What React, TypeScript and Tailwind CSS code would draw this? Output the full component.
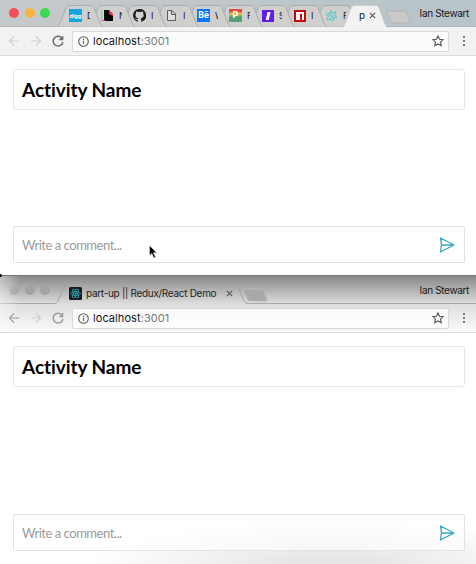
import React from "react";

const mark = "h-3 w-3 shrink-0";

function Digg() {
  return (
    <div className="flex h-[13px] w-[13px] shrink-0 items-center justify-center bg-[#15a7dc] font-['Roboto',sans-serif] text-[6px] font-bold leading-none text-white">
      digg
    </div>
  );
}

function Page() {
  return (
    <svg className="h-[13px] w-[13px] shrink-0" viewBox="0 0 13 13">
      <path d="M.5 1H8v11H.5z" fill="#5cc7cf" />
      <path d="M1.500 1H8L5 3l-2 8H1.500z" fill="#efe08a" />
      <path d="M8 1l4 4v3H7z" fill="#e83a58" />
      <path d="M3 1h5v4l4 2v5H3z" fill="#080808" />
      <path d="M8 1l4 4H8z" fill="#ec2851" />
      <path d="M1 11h3v1H1z" fill="#db38ba" />
    </svg>
  );
}

function Github() {
  return (
    <svg className="h-[13px] w-[13px] shrink-0" viewBox="0 0 16 16" fill="#1b1b1b">
      <path d="M8 0C3.58 0 0 3.58 0 8c0 3.54 2.29 6.53 5.47 7.59.4.07.55-.17.55-.38v-1.49C4 14.2 3.5 12.8 3.3 12.3c-.15-.3-.7-.9-1-1.1-.3-.2-.7-.5 0-.5.7 0 1.2.6 1.4.9.8 1.4 2 1 2.4.8.1-.6.3-1 .6-1.2C4.9 11 3 10.3 3 7.3c0-.9.3-1.6.8-2.2-.1-.2-.3-1 .1-2.1 0 0 .7-.2 2.2.8a7.6 7.6 0 014 0c1.5-1 2.2-.8 2.2-.8.4 1.1.2 1.9.1 2.1.5.6.8 1.3.8 2.2 0 3-1.9 3.7-3.7 3.9.3.3.6.8.6 1.5v2.5c0 .2.1.5.5.4A8 8 0 008 0z" />
    </svg>
  );
}

function Doc() {
  return (
    <svg className="h-[13px] w-[13px] shrink-0" viewBox="0 0 13 13" fill="#dedede" stroke="#5e5e5e">
      <path d="M2.500 1.500h4.500l3.500 3.500v6.500h-8zM6.500 1.500v4h4" />
    </svg>
  );
}

function Behance() {
  return (
    <div className="flex h-[13px] w-[13px] shrink-0 items-center justify-center bg-[#0878f7] font-['Roboto',sans-serif] text-[9px] font-bold leading-none text-white">
      Bē
    </div>
  );
}

function Pocket() {
  return (
    <div className="flex h-[13px] w-[13px] shrink-0 items-center justify-center bg-linear-to-b from-[#e14c3d] from-20% via-[#f0bf3c] via-35% to-[#56a078] to-60% font-['Roboto',sans-serif] text-[9px] font-bold leading-none text-white">
      P
    </div>
  );
}

function Slash() {
  return (
    <svg className={mark} viewBox="0 0 12 12">
      <path d="M0 0h12v12H0z" fill="#651be6" />
      <path d="M5.500 2h3L6.800 10h-3z" fill="#fff" />
    </svg>
  );
}

function Npm() {
  return (
    <svg className={mark} viewBox="0 0 12 12">
      <path d="M0 0h12v12H0z" fill="#c4080d" />
      <path d="M2 2h8v8H8V4H6v6H2z" fill="#fff" />
    </svg>
  );
}

function Teal() {
  return (
    <svg className="h-[13px] w-[13px] shrink-0" viewBox="0 0 13 13" fill="none" stroke="#4fcbc8" strokeWidth="1">
      <path d="M6 1.500L7.500 4 11 3 9.500 6 12 8.500 8.500 9 8 12 5 10 2 11 3 7.500 1 5 4.500 4.500zM4.500 4.500l4 4.500M9.500 6L5 10M7.500 4L3 7.500" />
    </svg>
  );
}

function ReactMark() {
  return (
    <svg className="h-[13px] w-[13px] shrink-0" viewBox="0 0 13 13" fill="none" stroke="#39aebd" strokeWidth=".7">
      <rect width="13" height="13" rx="1.500" fill="#171b1e" stroke="none" />
      <ellipse cx="6.500" cy="6.500" rx="5" ry="2" />
      <ellipse cx="6.500" cy="6.500" rx="5" ry="2" transform="rotate(60 6.500 6.500)" />
      <ellipse cx="6.500" cy="6.500" rx="5" ry="2" transform="rotate(120 6.500 6.500)" />
      <circle cx="6.500" cy="6.500" r=".8" fill="#39aebd" />
    </svg>
  );
}

const tabs = [
  { icon: <Digg />, text: "D", z: "z-[9]" },
  { icon: <Page />, text: "N", z: "z-[8]" },
  { icon: <Github />, text: "I", z: "z-[7]" },
  { icon: <Doc />, text: "I", z: "z-[6]" },
  { icon: <Behance />, text: "W", z: "z-[5]" },
  { icon: <Pocket />, text: "F", z: "z-[4]" },
  { icon: <Slash />, text: "S", z: "z-[3]" },
  { icon: <Npm />, text: "I", z: "z-[2]" },
  { icon: <Teal />, text: "F", z: "z-[1]" },
];

function Close() {
  return (
    <svg className="h-[7px] w-[7px] shrink-0" viewBox="0 0 7 7" stroke="#555" strokeWidth="1.100">
      <path d="M.8.8l5.400 5.400M6.200.8L.8 6.200" />
    </svg>
  );
}

function Lights({ colors }: { colors: string[] }) {
  return (
    <div className="flex w-[61px] shrink-0 gap-[5.500px] pl-[9px]">
      {colors.map((c, i) => (
        <span key={i} className={`h-[10px] w-[10px] rounded-full ${c}`} />
      ))}
    </div>
  );
}

function NewTab({ dim }: { dim?: boolean }) {
  return (
    <svg className="block h-[14px] w-[27px] shrink-0" viewBox="0 0 27 14">
      <path
        d="M2.500 1H19Q20.500 1 21 2L25.200 11.500Q25.500 13 24 13H8.500Q6.500 13 6 12L1.500 2.500Q1 1 2.500 1z"
        fill={dim ? "#a9a9a9" : "#cac9c8"}
        stroke={dim ? "#bababa" : "#a9afb1"}
        strokeWidth=".8"
      />
    </svg>
  );
}

function User() {
  return (
    <span className="ml-auto mr-[7px] whitespace-nowrap font-['Inter',sans-serif] text-[10px] tracking-[-0.350px] text-[#171717]">
      Ian Stewart
    </span>
  );
}

function Toolbar({ back, reload, className }: { back: string; reload: string; className: string }) {
  return (
    <div className={`flex h-[29px] shrink-0 items-center border-b border-[#dcdcdc] ${className}`}>
      <svg className="ml-2 h-3 w-3" viewBox="0 0 12 12" fill="none" stroke={back} strokeWidth="1.200">
        <path d="M11 6H1.500M6 1.500L1.500 6 6 10.500" />
      </svg>
      <svg className="ml-[10px] h-3 w-3" viewBox="0 0 12 12" fill="none" stroke="#cfcfcf" strokeWidth="1.200">
        <path d="M1 6h9.500M6 1.500L10.500 6 6 10.500" />
      </svg>
      <svg className="ml-[10px] h-3 w-3" viewBox="0 0 12 12" fill="none" stroke={reload} strokeWidth="1.400">
        <path d="M9.700 2.800A4.900 4.900 0 1 0 10.900 7" />
        <path d="M11.300.5v4.700H6.600z" fill={reload} stroke="none" />
      </svg>
      <div className="ml-2 flex h-[21px] w-[377px] items-center rounded-[2px] border border-[#d9d9d9] bg-white/80">
        <svg className="ml-[5px] h-[11px] w-[11px] shrink-0" viewBox="0 0 11 11" fill="none" stroke="#5d5d5d" strokeWidth="1.100">
          <circle cx="5.500" cy="5.500" r="4.800" />
          <path d="M5.500 4.800V8M5.500 2.700v1.200" />
        </svg>
        <span className="ml-1 whitespace-nowrap pt-px font-['Inter',sans-serif] text-[11px] leading-none tracking-[0.070px] text-[#141414]">
          localhost<span className="text-[#777]">:3001</span>
        </span>
        <svg className="ml-auto mr-1 h-3 w-3" viewBox="0 0 12 12" fill="none" stroke="#555" strokeWidth="1.100">
          <path d="M6 .9l1.500 3.300 3.700.4-2.700 2.500.8 3.700L6 9 2.700 10.800l.8-3.700L.8 4.600l3.700-.4z" />
        </svg>
      </div>
      <div className="ml-[13.500px] flex flex-col gap-[2px]">
        <i className="h-[2px] w-[2px] rounded-full bg-[#555]" />
        <i className="h-[2px] w-[2px] rounded-full bg-[#555]" />
        <i className="h-[2px] w-[2px] rounded-full bg-[#555]" />
      </div>
    </div>
  );
}

function Activity({ compose }: { compose: string }) {
  return (
    <div className="flex flex-1 flex-col pl-[13px] pr-[11px] pt-[13px] font-['Lato',sans-serif]">
      <h1 className="flex h-[41px] shrink-0 items-center rounded-[3px] border-[1.500px] border-[#e7e7e7] bg-white pl-2 pt-px text-[19px] font-bold tracking-[-0.060px] text-black [font-variant-ligatures:none]">
        Activity Name
      </h1>
      <div className={`mt-auto flex h-[37px] shrink-0 items-center rounded-[1px] border border-[#e3e3e3] pl-2 pr-[9px] text-[13px] text-[#9b9b9b] ${compose}`}>
        <span className="whitespace-nowrap pt-[2px] tracking-[-0.470px]">Write a comment...</span>
        <svg className="ml-auto h-4 w-4" viewBox="0 0 16 16" fill="none" stroke="#38adbd" strokeWidth="1.400" strokeLinejoin="round">
          <path d="M1.500 1L15 8 1.500 15 2.500 8zM2.500 8H15" />
        </svg>
      </div>
    </div>
  );
}

export default function App() {
  return (
    <main className="relative flex h-[564px] w-[476px] flex-col overflow-hidden bg-white">
      <section className="flex h-[276px] shrink-0 flex-col border-b border-[#777]">
        <header className="flex h-[27px] shrink-0 items-center border-b border-[#b0b5b7] bg-linear-to-r from-[#c6c9ca] to-[#b7c4ca]">
          <Lights colors={["bg-[#f05159]", "bg-[#f6b63d]", "bg-[#3bd94f]"]} />
          {tabs.map((tab, i) => (
            <div key={i} className={`relative flex h-[27px] w-8 shrink-0 items-center pl-2 pt-[5px] ${tab.z}`}>
              <svg className="absolute -left-1 top-0 h-[27px] w-12" viewBox="0 0 48 27" fill="#cfcfce" stroke="#a3a8aa" strokeWidth=".9">
                <path d="M0 26.500Q2 26 3 23L9 8Q10 5.500 12 5.500H34Q36 5.500 37 8L43 23Q44 26 46 26.500" />
              </svg>
              <span className="relative flex w-[13px] shrink-0 justify-center">{tab.icon}</span>
              <span className="relative ml-[5px] w-[3px] shrink-0 overflow-hidden font-['Inter',sans-serif] text-[9px] text-[#222]">
                {tab.text}
              </span>
            </div>
          ))}
          <div className="relative z-10 -ml-1 flex h-[27px] w-[41px] shrink-0 items-center gap-[4px] pl-[14px] pt-[5px] font-['Inter',sans-serif] text-[10px] text-[#222]">
            <svg className="absolute -left-1 top-0 h-7 w-[50px]" viewBox="0 0 50 28" fill="#f2f2f2" stroke="#c2c6c8" strokeWidth=".6">
              <path d="M0 28Q3 27 4 24L10 8Q11 5.500 13 5.500H35Q37 5.500 38 8L44 24Q45 27 48 28" />
            </svg>
            <span className="relative">p</span>
            <span className="relative"><Close /></span>
          </div>
          <span className="-ml-px pt-[7px]"><NewTab /></span>
          <User />
        </header>
        <Toolbar back="#cfcfcf" reload="#696969" className="bg-[#f2f2f2]" />
        <div className="flex flex-1 flex-col pb-3">
          <Activity compose="bg-white" />
        </div>
      </section>

      <section className="flex h-[288px] shrink-0 flex-col">
        <header className="flex h-7 shrink-0 items-center bg-linear-to-b from-[#898989] to-[#dedede]">
          <Lights colors={["bg-[#a2a2a2]", "bg-[#a2a2a2]", "bg-[#a2a2a2]"]} />
          <div className="relative flex h-7 w-[181px] shrink-0 items-center pl-2 pt-[7px]">
            <svg className="absolute -left-[61px] top-0 h-7 w-[476px]" viewBox="0 0 476 28" fill="none" stroke="#9a9a9a" strokeWidth=".8">
              <path d="M0 27.500H55Q57 27 58 25L65 8Q66 6.500 68 6.500H234Q236 6.500 237 8L244 25Q245 27.500 248 27.500H476" />
            </svg>
            <ReactMark />
            <span className="ml-1 whitespace-nowrap font-['Inter',sans-serif] text-[10px] tracking-[-0.300px] text-[#1d1d1d]">
              part-up || Redux/React Demo
            </span>
            <span className="ml-auto mr-[9px]"><Close /></span>
          </div>
          <span className="pt-[10px]"><NewTab dim /></span>
          <User />
        </header>
        <Toolbar back="#8e8e8e" reload="#9a9a9a" className="bg-linear-to-b from-[#dedede] to-[#fafafa]" />
        <div className="flex flex-1 flex-col bg-[radial-gradient(ellipse_240px_45px_at_330px_100%,#e6e6e6_15%,transparent)] pb-[13px]">
          <Activity compose="bg-white/60" />
        </div>
      </section>

      <div className="pointer-events-none absolute left-0 top-[276px] h-[56px] w-5 bg-linear-to-r from-white/45 to-transparent" />
      <div className="absolute left-0 top-[274px] h-[3px] w-[2px] rounded-r-full bg-black" />
      <svg className="absolute left-[149px] top-[245px] h-[14px] w-[9px]" viewBox="0 0 9 14">
        <path d="M.5.5v10l2.300-2.100 2 4.500 1.700-.8-2-4.300h3.200z" fill="#050505" stroke="#ddd" strokeWidth=".6" />
      </svg>
    </main>
  );
}
